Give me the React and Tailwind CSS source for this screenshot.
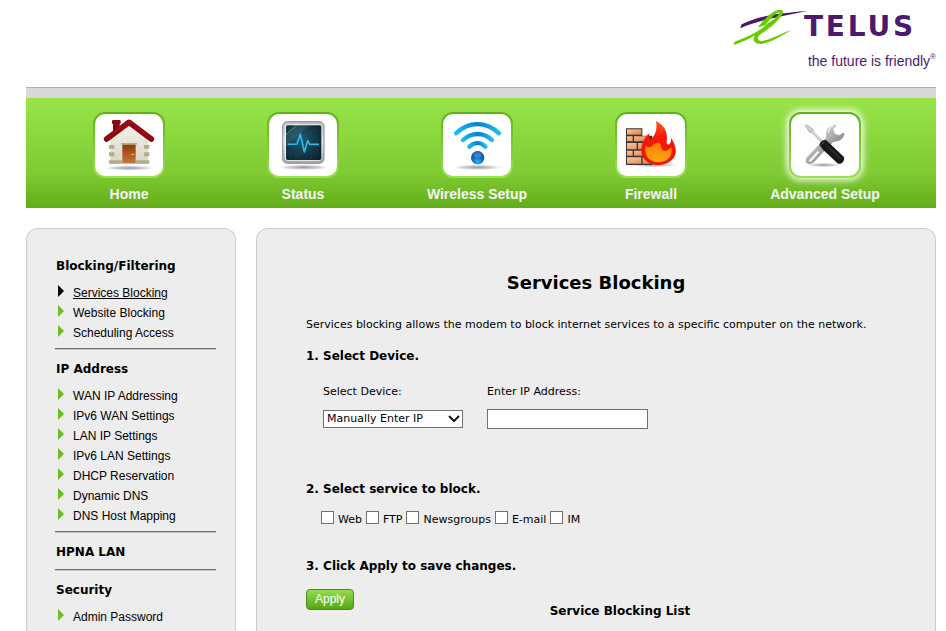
import { useState } from 'react';

const ICON_VIEW = '0 0 204 186';

const HomeIcon = () => (
  <svg viewBox={ICON_VIEW} className="h-full w-full" aria-hidden="true">
    <defs>
      <linearGradient id="wall" x1="0" y1="0" x2="0" y2="1">
        <stop offset="0" stopColor="#f4f2ea" />
        <stop offset="1" stopColor="#d9d6c4" />
      </linearGradient>
      <linearGradient id="door" x1="0" y1="0" x2="0" y2="1">
        <stop offset="0" stopColor="#8f3d08" />
        <stop offset="1" stopColor="#c9743f" />
      </linearGradient>
      <radialGradient id="shade">
        <stop offset="0" stopColor="#8b8b95" stopOpacity="0.9" />
        <stop offset="0.6" stopColor="#b5b5bd" stopOpacity="0.6" />
        <stop offset="1" stopColor="#ffffff" stopOpacity="0" />
      </radialGradient>
    </defs>
    <ellipse cx="104" cy="162" rx="84" ry="8" fill="url(#shade)" />
    <path d="M51 22q0-4 4-4h18q4 0 4 4v7h-3v24l-20 12V29h-3z" fill="#8e0510" />
    <path d="M46 70L102 28l57 42v79H46z" fill="url(#wall)" />
    <g fill="#b0ac8c">
      <path d="M42 139h39v10H42zM123 139h40v10h-40z" />
      <path d="M42 93h16v11H42zM42 115h16v12H42zM147 93h16v11h-16zM147 115h16v12h-16z" />
      <path d="M78 87h48v5H78z" />
    </g>
    <path d="M82 92h40v56H82z" fill="url(#door)" />
    <path d="M109 121h9" stroke="#f2c36b" strokeWidth="3" />
    <path d="M35 75L102 25l67 50" fill="none" stroke="#8e0510" strokeWidth="17" strokeLinecap="round" strokeLinejoin="round" />
    <path d="M34 72L102 21l68 51" fill="none" stroke="#a81522" strokeWidth="4" strokeLinecap="round" strokeLinejoin="round" opacity="0.6" />
  </svg>
);

const StatusIcon = () => (
  <svg viewBox={ICON_VIEW} className="h-full w-full" aria-hidden="true">
    <defs>
      <linearGradient id="frame" x1="0" y1="0" x2="0" y2="1">
        <stop offset="0" stopColor="#b9b9bf" />
        <stop offset="0.5" stopColor="#e6e6ea" />
        <stop offset="1" stopColor="#a3a3a8" />
      </linearGradient>
      <radialGradient id="screen" cx="0.4" cy="0.4" r="0.75">
        <stop offset="0" stopColor="#1d5a6e" />
        <stop offset="1" stopColor="#0a212c" />
      </radialGradient>
    </defs>
    <ellipse cx="104" cy="160" rx="84" ry="9" fill="url(#shade)" />
    <rect x="41" y="23" width="124" height="125" rx="14" fill="url(#frame)" stroke="#8c8c92" strokeWidth="3" />
    <rect x="48" y="31" width="110" height="109" rx="8" fill="#f3f3f5" />
    <rect x="51" y="34" width="106" height="104" rx="5" fill="url(#screen)" />
    <path d="M66 34v104M81 34v104M96 34v104M111 34v104M126 34v104M141 34v104M51 50h106M51 65h106M51 80h106M51 106h106M51 121h106" stroke="#2b6b80" strokeWidth="1" opacity="0.35" />
    <path d="M51 62L82 34h40L51 96z" fill="#ffffff" opacity="0.08" />
    <path d="M39 72L90 27" stroke="#ffffff" strokeWidth="2" opacity="0.5" />
    <path d="M56 91l28-1 10-30 12 54 10-34 6 11h28" fill="none" stroke="#33b5f0" strokeWidth="5" strokeLinejoin="round" />
  </svg>
);

const WirelessIcon = () => (
  <svg viewBox={ICON_VIEW} className="h-full w-full" aria-hidden="true">
    <defs>
      <linearGradient id="wave" x1="0" y1="0" x2="1" y2="0">
        <stop offset="0" stopColor="#17bdf2" />
        <stop offset="0.5" stopColor="#087ed2" />
        <stop offset="1" stopColor="#17bdf2" />
      </linearGradient>
      <radialGradient id="dot" cx="0.5" cy="0.8" r="0.8">
        <stop offset="0" stopColor="#28b4f4" />
        <stop offset="0.5" stopColor="#0b6cc4" />
        <stop offset="1" stopColor="#0848a0" />
      </radialGradient>
    </defs>
    <ellipse cx="103" cy="160" rx="80" ry="9" fill="url(#shade)" />
    <g fill="none" stroke="url(#wave)" strokeWidth="13" strokeLinecap="round">
      <path d="M39 58C76 21 130 21 168 58" />
      <path d="M60 78C86 54 122 54 147 78" />
      <path d="M79 98C94 84 113 84 127 98" />
    </g>
    <circle cx="104" cy="131" r="20" fill="url(#dot)" />
    <ellipse cx="104" cy="122" rx="12" ry="8" fill="#ffffff" opacity="0.2" />
  </svg>
);

const FirewallIcon = () => (
  <svg viewBox={ICON_VIEW} className="h-full w-full" aria-hidden="true">
    <defs>
      <linearGradient id="brick" x1="0" y1="0" x2="1" y2="1">
        <stop offset="0" stopColor="#fbc79d" />
        <stop offset="1" stopColor="#d8824f" />
      </linearGradient>
      <linearGradient id="flame" x1="0" y1="0" x2="0" y2="1">
        <stop offset="0" stopColor="#ff5a20" />
        <stop offset="0.35" stopColor="#f8190a" />
        <stop offset="1" stopColor="#ee1408" />
      </linearGradient>
      <linearGradient id="core" x1="0" y1="0" x2="0" y2="1">
        <stop offset="0" stopColor="#ff7a00" />
        <stop offset="1" stopColor="#ffa915" />
      </linearGradient>
    </defs>
    <ellipse cx="110" cy="153" rx="78" ry="7" fill="url(#shade)" />
    <path d="M27 43h49v22h30v88H27z" fill="#3b3335" />
    <g fill="url(#brick)">
      <path d="M30 46h43v16H30z" />
      <path d="M30 67h17v15H30zM51 67h40v15H51z" />
      <path d="M30 87h29v19H30zM63 87h30v19H63z" />
      <path d="M30 110h17v15H30zM51 110h40v15H51z" />
      <path d="M30 130h43v19H30zM77 130h28v19H77z" />
    </g>
    <path
      d="M117 21C142 34 154 54 149 84C148 92 155 94 159 88C163 82 163 76 161 70C170 84 174 92 176 106C180 134 154 153 124 153C94 153 73 137 73 109C73 88 84 70 97 58C96 68 97 74 101 77C114 66 122 46 117 21z"
      fill="url(#flame)"
    />
    <path
      d="M86 94C93 102 101 101 107 94C115 84 128 84 131 92C133 104 137 112 148 110C155 108 159 103 163 100C168 130 148 145 124 145C96 145 80 124 86 94z"
      fill="url(#core)"
    />
  </svg>
);

const ToolsIcon = () => (
  <svg viewBox={ICON_VIEW} className="h-full w-full" aria-hidden="true">
    <defs>
      <linearGradient id="steel" x1="0" y1="0" x2="1" y2="1">
        <stop offset="0" stopColor="#d9d9db" />
        <stop offset="0.5" stopColor="#a9a9ac" />
        <stop offset="1" stopColor="#7d7d80" />
      </linearGradient>
    </defs>
    <ellipse cx="98" cy="153" rx="56" ry="7" fill="url(#shade)" />
    <path d="M106 70L124 86L73 140C64 152 48 154 44 143C43 134 48 129 54 123z" fill="url(#steel)" />
    <path d="M80 110L57 136C53 140 52 143 55 143C60 144 64 138 68 134L85 115z" fill="#f5f5f5" />
    <path
      d="M137 33C120 31 106 42 105 60C105 68 106 70 103 76L120 90C126 83 130 84 138 82C150 80 160 70 160 57L156 56L145 64L131 59L127 46z"
      fill="url(#steel)"
    />
    <path d="M112 56C112 46 120 38 128 37" fill="none" stroke="#ececee" strokeWidth="4" />
    <path d="M41 35C43 31 47 31 52 34L67 45L69 53L97 80L91 86L63 58L55 56z" fill="#bdbdc1" />
    <path d="M46 36L64 52L94 82" fill="none" stroke="#ececee" strokeWidth="3" />
    <path d="M86 94C84 86 98 75 105 79L114 86L158 128C164 138 152 152 141 149L97 108z" fill="#18181a" />
    <path d="M107 94L150 135" stroke="#55555a" strokeWidth="2" />
    <path d="M91 92l9-9" stroke="#5c5c60" strokeWidth="3" />
  </svg>
);

const TelusMark = () => (
  <svg viewBox="46 28 224 110" className="-mr-1 mt-[9px] h-[37px] w-[75px]" aria-hidden="true">
    <path d="M68 85L71 74C118 52 160 42 268 34C205 48 134 57 68 85z" fill="#4b1a6d" />
    <path
      fillRule="evenodd"
      d="M48 135C47 131 49 127 54 124C90 110 126 94 148 72C137 79 126 83 121 81C134 66 160 33 184 30C196 29 198 37 192 46C180 67 150 89 127 104C117 112 118 122 129 123C151 124 187 102 222 90C194 106 156 131 128 132C107 132 103 119 112 106C93 117 70 129 48 135zM145 73C162 65 181 49 185 38C176 37 156 57 145 73z"
      fill="#66cc00"
    />
  </svg>
);

const NAV = [
  { label: 'Home', Icon: HomeIcon },
  { label: 'Status', Icon: StatusIcon },
  { label: 'Wireless Setup', Icon: WirelessIcon },
  { label: 'Firewall', Icon: FirewallIcon },
  { label: 'Advanced Setup', Icon: ToolsIcon },
];

const MENU = [
  { title: 'Blocking/Filtering', items: ['Services Blocking', 'Website Blocking', 'Scheduling Access'] },
  {
    title: 'IP Address',
    items: [
      'WAN IP Addressing',
      'IPv6 WAN Settings',
      'LAN IP Settings',
      'IPv6 LAN Settings',
      'DHCP Reservation',
      'Dynamic DNS',
      'DNS Host Mapping',
    ],
  },
  { title: 'HPNA LAN', items: [] },
  { title: 'Security', items: ['Admin Password'] },
];

const SERVICES = ['Web', 'FTP', 'Newsgroups', 'E-mail', 'IM'];

const Header = () => (
  <header className="flex h-[87px] justify-end">
    <TelusMark />
    <div className="pt-[9px] text-[#4b1a6d]">
      <div className="font-['DejaVu_Sans'] text-[28px] leading-9 font-bold tracking-widest">TELUS</div>
      <div className="flex pt-1.5 pl-1 font-['Liberation_Sans',Arial,sans-serif] text-[14px] leading-5 whitespace-nowrap">
        the future is friendly
        <span className="text-[8px] leading-3">®</span>
      </div>
    </div>
  </header>
);

const NavBar = ({ active }) => (
  <nav className="flex h-[110px] bg-linear-to-b from-[#98e44a] via-[#7fca32] via-70% to-[#62ad17] pt-[14px] pr-6 pl-4">
    {NAV.map(({ label, Icon }) => (
      <a
        key={label}
        href="#"
        className="flex flex-1 flex-col items-center gap-1.5 font-['Liberation_Sans',Arial,sans-serif] text-[14px] leading-5 font-bold text-[#f4f4f4]"
      >
        <span
          className={`h-[66px] w-[72px] rounded-xl bg-linear-to-b from-[#62b01c] to-[#98e450] p-0.5 ${
            label === active ? 'shadow-[0_0_7px_2px_#ffffff]' : ''
          }`}
        >
          <span className="block h-full w-full rounded-[10px] bg-white">
            <Icon />
          </span>
        </span>
        {label}
      </a>
    ))}
  </nav>
);

const Sidebar = ({ active }) => (
  <aside className="w-[210px] shrink-0 rounded-t-xl border border-b-0 border-[#cccccc] bg-[#ededed] pt-[29px] pr-[19px] pl-7">
    {MENU.map(({ title, items }, i) => (
      <section key={title}>
        {i > 0 && (
          <hr
            className={`mb-[11px] h-0.5 border-t border-b border-t-[#6e6e6e] border-b-[#c4c4c4] ${
              MENU[i - 1].items.length ? 'mt-[5px]' : 'mt-[9px]'
            }`}
          />
        )}
        <h2 className="pl-px text-[12px] leading-4 font-bold">{title}</h2>
        {items.length > 0 && (
          <ul className="mt-[9px] pl-[3px] font-['Liberation_Sans',Arial,sans-serif] text-[12px] leading-5">
            {items.map((item) => (
              <li key={item} className="flex items-start gap-[9px]">
                <svg viewBox="0 0 6 12" className="mt-0.5 h-3 w-1.5" aria-hidden="true">
                  <path d="M0 0L6 6L0 12z" fill={item === active ? '#000000' : '#6bbf22'} />
                </svg>
                <a href="#" className={item === active ? 'underline' : ''}>
                  {item}
                </a>
              </li>
            ))}
          </ul>
        )}
      </section>
    ))}
  </aside>
);

const ServicesBlocking = () => {
  const [device, setDevice] = useState('manual');
  const [ip, setIp] = useState('');

  return (
    <main className="min-w-0 flex-1 rounded-t-xl border border-b-0 border-[#cccccc] bg-[#ededed] px-[49px] pt-[42px] text-[11px] leading-4">
      <h1 className="text-center text-[18px] leading-6 font-bold">Services Blocking</h1>
      <p className="mt-[22px]">
        Services blocking allows the modem to block internet services to a specific computer on the network.
      </p>

      <h2 className="mt-[15px] text-[12px] font-bold">1. Select Device.</h2>
      <div className="mt-5 flex gap-6 pl-[17px]">
        <div className="flex w-[140px] flex-col gap-[9px]">
          <label htmlFor="device">Select Device:</label>
          <div className="relative flex h-5 items-center">
            <select
              id="device"
              value={device}
              onChange={(e) => setDevice(e.target.value)}
              className="h-[18px] w-full appearance-none border border-[#707070] bg-white pl-[3px] leading-4"
            >
              <option value="manual">Manually Enter IP</option>
            </select>
            <svg viewBox="0 0 12 8" className="pointer-events-none absolute right-[3px] h-2 w-3" aria-hidden="true">
              <path d="M1 1L6 6L11 1" fill="none" stroke="#1a1a1a" strokeWidth="2" />
            </svg>
          </div>
        </div>
        <div className="flex w-[161px] flex-col gap-[9px]">
          <label htmlFor="ip">Enter IP Address:</label>
          <input
            id="ip"
            type="text"
            value={ip}
            onChange={(e) => setIp(e.target.value)}
            className="h-5 w-full border border-[#707070] bg-white px-1"
          />
        </div>
      </div>

      <h2 className="mt-[52px] text-[12px] font-bold">2. Select service to block.</h2>
      <div className="mt-3.5 flex gap-1 pl-[15px]">
        {SERVICES.map((service) => (
          <label key={service} className="flex h-[17px] items-end gap-1">
            <input type="checkbox" className="mb-1 size-[13px] appearance-none border border-[#707070] bg-white checked:bg-[#6bbf22]" />
            {service}
          </label>
        ))}
      </div>

      <h2 className="mt-[30px] text-[12px] font-bold">3. Click Apply to save changes.</h2>
      <div className="mt-[15px] flex items-start">
        <button
          type="button"
          className="h-[21px] w-12 rounded-[4px] border border-[#4a8a14] bg-linear-to-b from-[#94dc50] to-[#55a812] pb-0.5 font-['Liberation_Sans',Arial,sans-serif] text-[12px] leading-4 text-white"
        >
          Apply
        </button>
        <h2 className="mt-3.5 flex-1 text-center text-[12px] font-bold">Service Blocking List</h2>
      </div>
    </main>
  );
};

export default function App() {
  return (
    <div className="flex min-h-screen flex-col bg-white pr-[10px] pl-[26px] font-['DejaVu_Sans',Verdana,sans-serif] text-black">
      <Header />
      <div className="h-[11px] border-t border-[#b0b0b0] bg-[#d9d9d9]" />
      <NavBar active="Advanced Setup" />
      <div className="mt-5 flex flex-1 gap-5">
        <Sidebar active="Services Blocking" />
        <ServicesBlocking />
      </div>
    </div>
  );
}
